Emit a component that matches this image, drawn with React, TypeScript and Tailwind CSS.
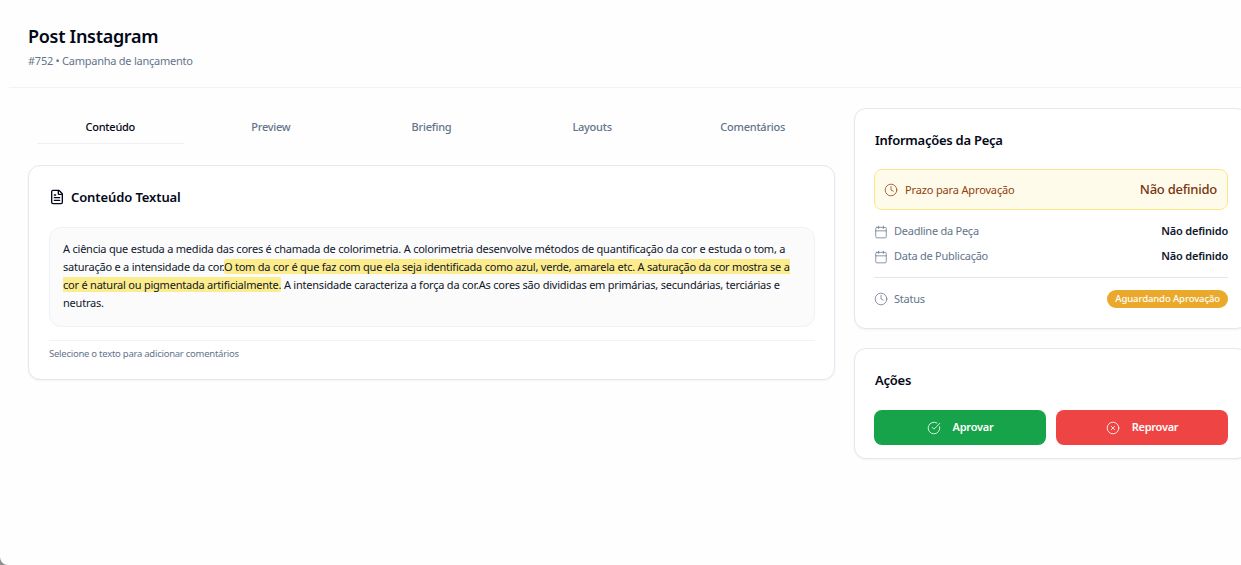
import { Calendar, CircleCheckBig, CircleX, Clock, FileText } from "lucide-react";

const tabs = ["Conteúdo", "Preview", "Briefing", "Layouts", "Comentários"];

function Row({ label, value }: { label: string; value: string }) {
  return (
    <div className="flex h-[25px] items-center justify-between">
      <div className="flex items-center gap-[6px] text-[#64748b]">
        <Calendar size={14} strokeWidth={1.3} />
        <span className="text-[11px]">{label}</span>
      </div>
      <span className="text-[11px] font-semibold tracking-[-0.2px] text-[#0f172a]">{value}</span>
    </div>
  );
}

export default function App() {
  return (
    <div className="h-[565px] w-[1241px] overflow-hidden bg-[#8f8f8f]">
      <div className="h-full w-full overflow-hidden rounded-bl-[8px] bg-[#fefefe] font-['Noto_Sans','Open_Sans',sans-serif] tracking-[-0.25px] text-[#020817]">
        <header className="ml-[9px] h-[88px] border-b border-[#f1f3f6] pl-[19px] pt-[23px]">
          <h1 className="text-[18px] leading-[26px] font-semibold tracking-[-0.3px]">Post Instagram</h1>
          <p className="mt-[4px] text-[11px] leading-[16px] text-[#64748b]">#752 • Campanha de lançamento</p>
        </header>
        <div className="flex w-[1248px] gap-[19px] pl-[28px] pt-[20px]">
          <main className="w-[807px] shrink-0">
            <nav className="grid h-[36px] grid-cols-5 px-[2px]">
              {tabs.map((t, i) => (
                <div key={t} className={"flex h-[36px] items-center justify-center pt-[3px] text-[11px] font-medium " + (i === 0 ? "mx-[7px] border-b border-[#eef0f3] text-[#020817]" : "text-[#64748b]")}>
                  {t}
                </div>
              ))}
            </nav>
            <section className="mt-[21px] h-[215px] rounded-xl border border-[#e2e8f0] bg-white pl-[20px] pr-[19px] pt-[19px] shadow-[0_1px_2px_rgba(15,23,42,0.05)]">
              <div className="flex items-center gap-[6px]">
                <FileText size={16} strokeWidth={2} className="text-[#020817]" />
                <h2 className="text-[13px] leading-[24px] font-semibold tracking-[-0.1px]">Conteúdo Textual</h2>
              </div>
              <div className="mt-[18px] h-[100px] rounded-xl border border-[#eef1f5] bg-[#fbfbfc] px-[13px] pt-[12px] text-[11px] leading-[18px] tracking-[-0.22px] text-[#0f172a]">
                A ciência que estuda a medida das cores é chamada de colorimetria. A colorimetria desenvolve métodos de quantificação da cor e estuda o tom, a saturação e a intensidade da cor.
                <mark className="rounded-[2px] bg-[#fdec8c] text-[#0f172a]">O tom da cor é que faz com que ela seja identificada como azul, verde, amarela etc. A saturação da cor mostra se a cor é natural ou pigmentada artificialmente.</mark>{" "}
                A intensidade caracteriza a força da cor.As cores são divididas em primárias, secundárias, terciárias e neutras.
              </div>
              <p className="mt-[13px] border-t border-[#f1f3f6] pt-[5px] text-[9.5px] leading-[15px] text-[#64748b]">Selecione o texto para adicionar comentários</p>
            </section>
          </main>
          <aside className="flex w-[394px] shrink-0 flex-col gap-[19px]">
            <section className="h-[221px] rounded-xl border border-[#e2e8f0] bg-white px-[19px] pt-[19px] shadow-[0_1px_2px_rgba(15,23,42,0.05)]">
              <h2 className="ml-px text-[13px] leading-[24px] font-semibold">Informações da Peça</h2>
              <div className="mt-[17px] flex h-[41px] items-center justify-between rounded-lg border border-[#fde68a] bg-[#fffbeb] pl-[9px] pr-[10px]">
                <div className="flex items-center gap-[7px] text-[#92400e]">
                  <Clock size={14} strokeWidth={1.3} />
                  <span className="pt-px text-[11px] tracking-[-0.15px]">Prazo para Aprovação</span>
                </div>
                <span className="pt-px text-[13px] font-medium text-[#78350f]">Não definido</span>
              </div>
              <div className="mt-[9px]">
                <Row label="Deadline da Peça" value="Não definido" />
                <Row label="Data de Publicação" value="Não definido" />
              </div>
              <div className="mt-[8px] flex items-center justify-between border-t border-[#e2e8f0] pt-[12px]">
                <div className="flex items-center gap-[6px] text-[#64748b]">
                  <Clock size={14} strokeWidth={1.3} />
                  <span className="text-[11px]">Status</span>
                </div>
                <span className="flex h-[18px] items-center rounded-full bg-[#eaa92a] px-[8px] text-[9.5px] font-medium tracking-[-0.1px] text-white">Aguardando Aprovação</span>
              </div>
            </section>
            <section className="h-[111px] rounded-xl border border-[#e2e8f0] bg-white px-[19px] pt-[19px] shadow-[0_1px_2px_rgba(15,23,42,0.05)]">
              <h2 className="ml-px text-[13px] leading-[24px] font-semibold">Ações</h2>
              <div className="mt-[18px] grid grid-cols-2 gap-[10px]">
                <button className="flex h-[35px] items-center justify-center gap-[12px] rounded-lg bg-[#16a34a] text-[11px] font-semibold text-white">
                  <CircleCheckBig size={14} strokeWidth={1.4} />
                  <span>Aprovar</span>
                </button>
                <button className="flex h-[35px] items-center justify-center gap-[12px] rounded-lg bg-[#ef4444] text-[11px] font-semibold text-white">
                  <CircleX size={14} strokeWidth={1.4} />
                  <span>Reprovar</span>
                </button>
              </div>
            </section>
          </aside>
        </div>
      </div>
    </div>
  );
}
